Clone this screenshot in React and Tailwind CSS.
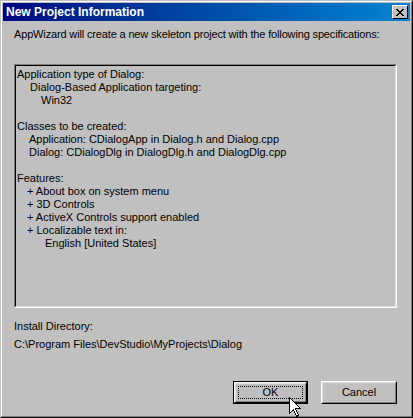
import React from "react";

const font = "font-['Liberation_Sans',Arial,sans-serif]";

const Btn = ({ label, isDefault = false, className = "" }) => (
  <div
    className={`h-[23px] ${isDefault ? "border border-black" : ""} ${className}`}
  >
    <div className="w-full h-full border border-t-white border-l-white border-r-black border-b-black">
      <div className="w-full h-full border border-t-[#dfdfdf] border-l-[#dfdfdf] border-r-[#808080] border-b-[#808080] flex items-center justify-center p-[2px]">
        <div
          className={`w-full h-full flex items-center justify-center text-[11px] text-black ${
            isDefault ? "border border-dotted border-black" : ""
          }`}
        >
          {label}
        </div>
      </div>
    </div>
  </div>
);

export default function App() {
  const lines = [
    ["Application type of Dialog:", "pl-0"],
    ["Dialog-Based Application targeting:", "pl-[13px]"],
    ["Win32", "pl-[24px]"],
    ["", ""],
    ["Classes to be created:", "pl-0"],
    ["Application: CDialogApp in Dialog.h and Dialog.cpp", "pl-[12px]"],
    ["Dialog: CDialogDlg in DialogDlg.h and DialogDlg.cpp", "pl-[12px]"],
    ["", ""],
    ["Features:", "pl-0"],
    ["+ About box on system menu", "pl-[10px]"],
    ["+ 3D Controls", "pl-[10px]"],
    ["+ ActiveX Controls support enabled", "pl-[10px]"],
    ["+ Localizable text in:", "pl-[10px]"],
    ["English [United States]", "pl-[28px]"],
  ];

  return (
    <div className={`w-[413px] h-[418px] bg-[#c0c0c0] ${font} relative`}>
      <div className="w-full h-full border border-t-[#c0c0c0] border-l-[#c0c0c0] border-r-black border-b-black">
        <div className="w-full h-full border border-t-white border-l-white border-r-[#808080] border-b-[#808080] p-[1px] flex flex-col">
          {/* title bar */}
          <div className="h-[18px] flex items-center justify-between bg-gradient-to-r from-[#000080] to-[#1084d0] pl-[3px] pr-[2px]">
            <span className="text-white font-bold text-[12px] leading-none">
              New Project Information
            </span>
            <div className="w-[16px] h-[14px] bg-[#c0c0c0] border border-t-white border-l-white border-r-black border-b-black flex items-center justify-center">
              <svg width="8" height="7" viewBox="0 0 8 7">
                <path
                  d="M0 0h2v1h1v1h2V1h1V0h2v1H7v1H6v1H5v1h1v1h1v1h1v1H6V6H5V5H3v1H2v1H0V6h1V5h1V4h1V3H2V2H1V1H0z"
                  fill="black"
                />
              </svg>
            </div>
          </div>

          {/* body */}
          <div className="flex flex-col pl-[11px] pt-[7px] text-[11px] leading-[13px] text-black">
            <div className="tracking-[-0.15px] whitespace-nowrap">
              AppWizard will create a new skeleton project with the following
              specifications:
            </div>

            <div className="mt-[23px] w-[383px] h-[244px] border-t border-l border-t-[#808080] border-l-[#808080] border-b border-r border-b-white border-r-white">
              <div className="w-full h-full border-t border-l border-t-black border-l-black border-b border-r border-b-[#dfdfdf] border-r-[#dfdfdf] pt-[2px] pl-[1px]">
                {lines.map(([t, pad], i) => (
                  <div key={i} className={`h-[13px] whitespace-nowrap ${pad}`}>
                    {t}
                  </div>
                ))}
              </div>
            </div>

            <div className="mt-[12px]">Install Directory:</div>
            <div className="mt-[5px]">
              C:\Program Files\DevStudio\MyProjects\Dialog
            </div>

            <div className="flex mt-[30px] pl-[219px] gap-[13px]">
              <Btn label="OK" isDefault className="w-[75px]" />
              <Btn label="Cancel" className="w-[76px]" />
            </div>
          </div>
        </div>
      </div>

      {/* mouse pointer */}
      <svg
        className="absolute left-[289px] top-[397px]"
        width="13"
        height="21"
        viewBox="0 0 13 21"
      >
        <path
          d="M0.5 0.5V16.5L4.5 12.5L7.5 19.5L9.5 18.5L6.5 11.5H11.5Z"
          fill="white"
          stroke="black"
          strokeWidth="1"
          shapeRendering="crispEdges"
        />
      </svg>
    </div>
  );
}
